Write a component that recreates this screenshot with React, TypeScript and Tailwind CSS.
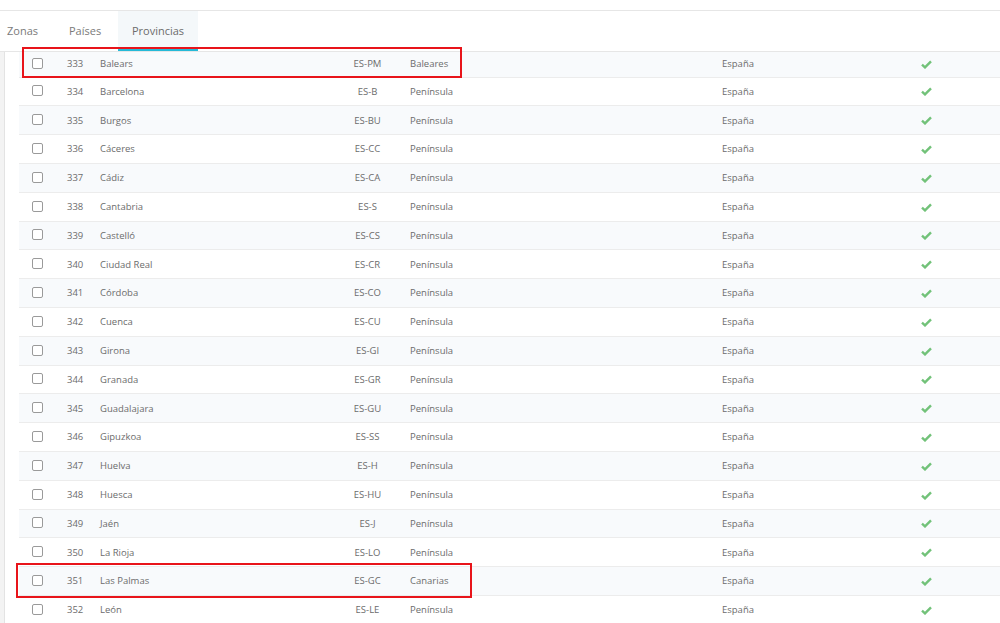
import React from "react";

const rows: [number, string, string, string][] = [
  [333, "Balears", "ES-PM", "Baleares"],
  [334, "Barcelona", "ES-B", "Península"],
  [335, "Burgos", "ES-BU", "Península"],
  [336, "Cáceres", "ES-CC", "Península"],
  [337, "Cádiz", "ES-CA", "Península"],
  [338, "Cantabria", "ES-S", "Península"],
  [339, "Castelló", "ES-CS", "Península"],
  [340, "Ciudad Real", "ES-CR", "Península"],
  [341, "Córdoba", "ES-CO", "Península"],
  [342, "Cuenca", "ES-CU", "Península"],
  [343, "Girona", "ES-GI", "Península"],
  [344, "Granada", "ES-GR", "Península"],
  [345, "Guadalajara", "ES-GU", "Península"],
  [346, "Gipuzkoa", "ES-SS", "Península"],
  [347, "Huelva", "ES-H", "Península"],
  [348, "Huesca", "ES-HU", "Península"],
  [349, "Jaén", "ES-J", "Península"],
  [350, "La Rioja", "ES-LO", "Península"],
  [351, "Las Palmas", "ES-GC", "Canarias"],
  [352, "León", "ES-LE", "Península"],
];

function Check() {
  return (
    <svg width="11" height="9" viewBox="0 0 11 9">
      <path d="M1 4.6 L4 7.4 L10 1.4" fill="none" stroke="#72c279" strokeWidth="2.4" strokeLinejoin="miter" />
    </svg>
  );
}

export default function App() {
  return (
    <div
      className="relative w-[1000px] h-[623px] overflow-hidden bg-white text-[#6c6c6c]"
      style={{ fontFamily: '"Open Sans", "Liberation Sans", sans-serif' }}
    >
      <div className="h-[11px] border-b border-[#e6e6e6]" />
      <div className="flex h-[41px] border-b border-[#e6e6e6] text-[11px]">
        <div className="flex items-center pl-[7px] w-[62px] text-[#7a7a7a]">Zonas</div>
        <div className="flex items-center pl-[7px] w-[56px] text-[#7a7a7a]">Países</div>
        <div className="flex items-center justify-center w-[80px] bg-[#f4f8fa] border-b-[3px] border-[#25b9d7] text-[#6c6c6c] pt-[3px]">
          Provincias
        </div>
      </div>
      <div className="flex">
        <div className="w-[5px] bg-[#f3f3f3] border-r border-[#e3e3e3] h-[580px]" />
        <div className="flex-1 pl-[14px]">
          {rows.map(([id, name, iso, zone], i) => (
            <div
              key={id}
              className={`flex items-center text-[9.5px] border-b border-[#ececec] ${i === 0 ? "h-[25.6px]" : "h-[28.8px] pt-[1px]"} ${i % 2 === 0 ? "bg-[#f8fafc]" : "bg-white"}`}
            >
              <div className="w-[48px] pl-[13px] flex items-center">
                <div className="w-[11px] h-[11px] rounded-[2px] border border-[#9a9a9a] bg-white -mt-[2px]" />
              </div>
              <div className="w-[33px]">{id}</div>
              <div className="w-[240px]">{name}</div>
              <div className="w-[55px] text-center">{iso}</div>
              <div className="w-[327px] pl-[15px]">{zone}</div>
              <div className="w-[158px]">España</div>
              <div className="w-[92px] flex justify-center">
                <Check />
              </div>
            </div>
          ))}
        </div>
      </div>
      <div className="absolute left-[22px] top-[47px] w-[440px] h-[31px] border-2 border-[#e8141a]" />
      <div className="absolute left-[16px] top-[563px] w-[456px] h-[35px] border-2 border-[#e8141a]" />
    </div>
  );
}
